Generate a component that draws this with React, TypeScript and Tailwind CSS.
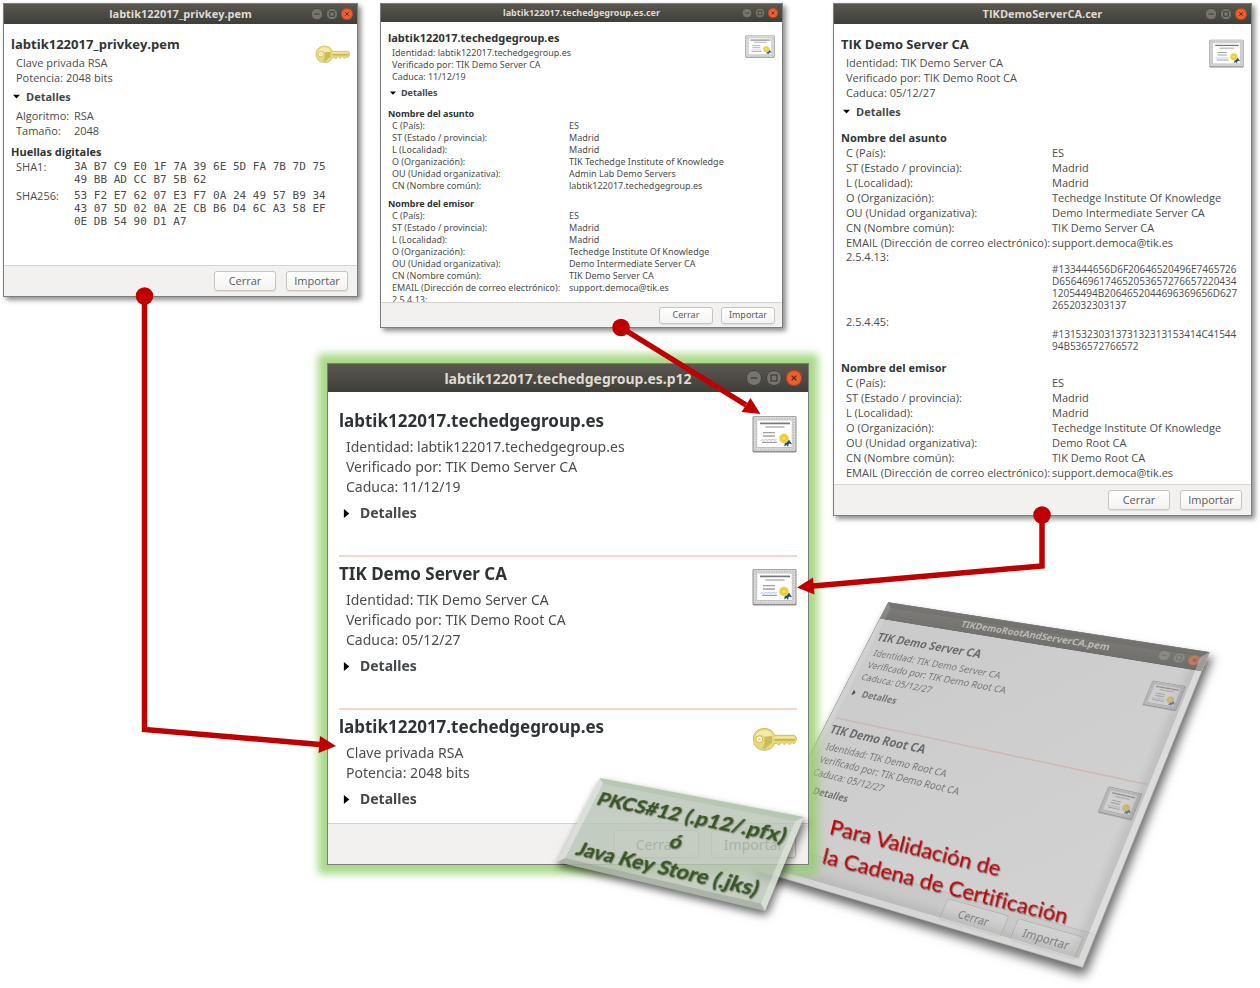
import type { ReactNode } from "react";

type Size = "xs" | "sm" | "lg";
type Point = [number, number];

const styles = {
  xs: {
    font: "font-['Noto_Sans',sans-serif]",
    bar: "h-[18px] text-[9px]",
    controls: "right-1 gap-[3px]",
    dot: "size-[10px]",
    body: "px-[7px] pt-2",
    heading: "text-[11px] leading-4",
    lines: "mt-px pl-1 text-[9px] leading-3",
    toggle: "mt-1 pl-[2px] gap-[5px] text-[9px] leading-3",
    arrow: "size-[6px]",
    cert: "mt-[5px] h-[23px] w-[30px]",
    key: "mt-[5px] h-[16px] w-[30px]",
    section: "text-[9px] leading-3",
    rows: "pl-1 text-[9px] leading-3",
    grid: "grid grid-cols-[177px_1fr]",
    footer: "h-[25px] gap-2 pr-[7px] text-[9px]",
    button: "h-[17px] w-[54px]",
  },
  sm: {
    font: "font-['Open_Sans',sans-serif]",
    bar: "h-[20px] text-[11px]",
    controls: "right-1 gap-[3px]",
    dot: "size-[12px]",
    body: "px-[7px] pt-[11px]",
    heading: "text-[13px] leading-[18px]",
    lines: "mt-[2px] pl-[5px] text-[11px] leading-[15px]",
    toggle: "mt-1 pl-[2px] gap-[6px] text-[11px] leading-[15px]",
    arrow: "size-[7px]",
    cert: "mt-1 h-[29px] w-[35px]",
    key: "mt-[10px] h-[19px] w-[35px]",
    section: "text-[11px] leading-[15px]",
    rows: "pl-[5px] text-[11px] leading-[15px]",
    grid: "grid grid-cols-[206px_1fr]",
    footer: "h-[31px] gap-[10px] pr-[9px] text-[11px]",
    button: "h-5 w-[62px]",
  },
  lg: {
    font: "font-['Noto_Sans',sans-serif]",
    bar: "h-[28px] text-[14px]",
    controls: "right-[6px] gap-1",
    dot: "size-4",
    body: "px-[11px] pt-[17px]",
    heading: "text-[17px] leading-6",
    lines: "mt-1 pl-[7px] text-[14px] leading-5",
    toggle: "mt-[6px] pl-[4px] gap-2 text-[14px] leading-5",
    arrow: "size-[9px]",
    cert: "mt-[6px] h-[38px] w-[45px]",
    key: "mt-[12px] h-[25px] w-[45px]",
    section: "text-[14px] leading-5",
    rows: "pl-[7px] text-[14px] leading-5",
    grid: "grid grid-cols-[240px_1fr]",
    footer: "h-[41px] gap-3 pr-3 text-[14px]",
    button: "h-7 w-[85px]",
  },
};

/* Projects a w x h box onto four corners, clockwise from the top left. */
function project(w: number, h: number, [p0, p1, p2, p3]: [Point, Point, Point, Point]) {
  const dx1 = p1[0] - p2[0];
  const dy1 = p1[1] - p2[1];
  const dx2 = p3[0] - p2[0];
  const dy2 = p3[1] - p2[1];
  const sx = p0[0] - p1[0] + p2[0] - p3[0];
  const sy = p0[1] - p1[1] + p2[1] - p3[1];
  const det = dx1 * dy2 - dx2 * dy1;
  const g = (sx * dy2 - dx2 * sy) / det;
  const k = (dx1 * sy - sx * dy1) / det;
  const a = (p1[0] - p0[0] + g * p1[0]) / w;
  const d = (p1[1] - p0[1] + g * p1[1]) / w;
  const b = (p3[0] - p0[0] + k * p3[0]) / h;
  const e = (p3[1] - p0[1] + k * p3[1]) / h;
  return `matrix3d(${[a, d, 0, g / w, b, e, 0, k / h, 0, 0, 1, 0, p0[0], p0[1], 0, 1].join(",")})`;
}

function CertIcon({ className }: { className: string }) {
  return (
    <svg viewBox="0 0 45 38" preserveAspectRatio="none" className={`shrink-0 ${className}`} aria-hidden="true">
      <rect x="0.5" y="1" width="44" height="36.5" rx="1.5" fill="#8f8f8f" />
      <rect x="1.6" y="1.8" width="41.8" height="34" rx="0.8" fill="#e6e6e6" />
      <rect x="3.2" y="3.4" width="38.6" height="30.800" fill="none" stroke="#c3c3c3" strokeWidth="1.6" strokeDasharray="1.8 0.8" />
      <rect x="4.800" y="5" width="35.400" height="27.600" fill="#fff" stroke="#b5b5b5" strokeWidth="0.8" />
      <path d="M8 8.4h30" stroke="#777" strokeWidth="1.7" />
      <path d="M13.5 12h19" stroke="#a4a4a4" strokeWidth="1.3" />
      <path d="M11 17.6h12M11 21h12M10 27.4h15" stroke="#a0a0a0" strokeWidth="1.3" />
      <path d="M8.5 25.6l1.800-1 1.400.800 2-.900 1.600.800 2-.900 1.800.900 2-1 1.600.900 2-.600" fill="none" stroke="#9db9de" strokeWidth="0.9" />
      <path d="M33.2 26l-1 5.400 2.400-1.400 1.400 2 .800-3.600 3.200.800-3-4.600z" fill="#1d4a96" />
      <circle cx="32" cy="23.400" r="4.700" fill="#f6cf36" stroke="#f9e27b" strokeWidth="0.8" strokeDasharray="1.2 0.8" />
      <circle cx="32" cy="23.400" r="2.200" fill="#fbe57a" stroke="#dfac1e" strokeWidth="0.5" />
    </svg>
  );
}

function KeyIcon({ className }: { className: string }) {
  return (
    <svg viewBox="0 0 45 25" preserveAspectRatio="none" className={`shrink-0 ${className}`} aria-hidden="true">
      <path
        d="M12 1.5C18 1.5 21 4 22.5 8.3H42.5L44.3 10.5V13.5L42 16.8 40 15.4 37.6 17.6 35 15.2 32.2 17.6 29.8 15.2 27 18 24.5 16.4H22.5C21 20.8 17.5 23.2 12 23.2 5.5 23.2 1.4 18.5 1.4 12.3 1.4 6 5.5 1.5 12 1.5Z"
        fill="#e6d880"
        stroke="#d2be58"
        strokeWidth="1"
      />
      <path d="M12 3.2C17 3.2 19.5 5.5 20.6 9.2L12.5 9.6C10 6.5 5.5 7.5 3.4 10 4 6 7.5 3.2 12 3.2Z" fill="#f3ebab" />
      <path d="M12.5 10L20 8.8V15.5L13 21.8H10.5L12.5 16.5Z" fill="#c2ae48" opacity="0.7" />
      <path d="M22.5 10.2H42.3" stroke="#f5edae" strokeWidth="1.2" />
      <path d="M22.5 13H42.8" stroke="#c3a935" strokeWidth="1.4" />
      <circle cx="7.4" cy="12.2" r="3.3" fill="#fff" stroke="#d2bd50" strokeWidth="1" />
      <circle cx="7.4" cy="12.2" r="1.5" fill="#e9da80" />
    </svg>
  );
}

function WindowControls({ size }: { size: Size }) {
  const s = styles[size];
  return (
    <div className={`absolute inset-y-0 flex items-center ${s.controls}`}>
      <button aria-label="Minimizar" className={`rounded-full bg-[#77756d] ${s.dot}`}>
        <svg viewBox="0 0 16 16" className="size-full">
          <circle cx="8" cy="8" r="7.5" fill="none" stroke="#3a3935" />
          <path d="M4.5 8h7" stroke="#3c3b37" strokeWidth="1.3" />
        </svg>
      </button>
      <button aria-label="Maximizar" className={`rounded-full bg-[#77756d] ${s.dot}`}>
        <svg viewBox="0 0 16 16" className="size-full">
          <circle cx="8" cy="8" r="7.5" fill="none" stroke="#3a3935" />
          <rect x="5" y="5" width="6" height="6" fill="none" stroke="#3c3b37" strokeWidth="1.2" />
        </svg>
      </button>
      <button aria-label="Cerrar ventana" className={`rounded-full bg-[#ee5f2e] ${s.dot}`}>
        <svg viewBox="0 0 16 16" className="size-full">
          <circle cx="8" cy="8" r="7.5" fill="none" stroke="#8e3a1c" strokeWidth="0.8" />
          <path d="M5.6 5.6l4.8 4.8M10.4 5.6l-4.8 4.8" stroke="#5b2411" strokeWidth="1.2" />
        </svg>
      </button>
    </div>
  );
}

function Window({ title, size, className, children }: { title: string; size: Size; className: string; children: ReactNode }) {
  const s = styles[size];
  return (
    <section className={`flex flex-col border border-[#7d7d7d] bg-white text-[#4c4c4c] ${s.font} ${className}`}>
      <header className={`relative flex shrink-0 items-center justify-center bg-gradient-to-b from-[#5a574f] to-[#3f3e39] font-bold text-[#dfdbd2] ${s.bar}`}>
        <h1>{title}</h1>
        <WindowControls size={size} />
      </header>
      <div className={`min-h-0 flex-1 overflow-hidden ${s.body}`}>{children}</div>
      <footer className={`flex shrink-0 items-center justify-end border-t border-[#d6d3d0] bg-[#f2f1f0] ${s.footer}`}>
        {["Cerrar", "Importar"].map((label) => (
          <button
            key={label}
            className={`flex items-center justify-center rounded-[3px] border border-[#c8c4c0] bg-gradient-to-b from-white to-[#f4f3f2] text-[#5c5c5c] shadow-[0_1px_1px_rgba(0,0,0,0.08)] ${s.button}`}
          >
            {label}
          </button>
        ))}
      </footer>
    </section>
  );
}

function Entry({ size, name, lines, icon, open = false }: { size: Size; name: string; lines: string[]; icon: "cert" | "key"; open?: boolean }) {
  const s = styles[size];
  return (
    <div>
      <div className="flex items-start justify-between">
        <div>
          <h2 className={`font-bold text-[#2e3436] ${s.heading}`}>{name}</h2>
          <div className={s.lines}>
            {lines.map((line) => (
              <p key={line}>{line}</p>
            ))}
          </div>
        </div>
        {icon === "cert" ? <CertIcon className={s.cert} /> : <KeyIcon className={s.key} />}
      </div>
      <button aria-expanded={open} className={`flex items-center font-bold text-[#45494b] ${s.toggle}`}>
        <svg viewBox="0 0 10 10" className={s.arrow} aria-hidden="true">
          <path d={open ? "M0 2.5H10L5 8Z" : "M1 0V10L7 5Z"} fill="#000" />
        </svg>
        Detalles
      </button>
    </div>
  );
}

function Fields({ size, title, rows }: { size: Size; title: string; rows: [string, string][] }) {
  const s = styles[size];
  return (
    <>
      <h3 className={`font-bold text-[#2e3436] ${s.section}`}>{title}</h3>
      <dl className={s.rows}>
        {rows.map(([label, value]) => (
          <div key={label} className={s.grid}>
            <dt className="whitespace-nowrap">{label}</dt>
            <dd className="whitespace-nowrap">{value}</dd>
          </div>
        ))}
      </dl>
    </>
  );
}

function LongField({ label, value }: { label: string; value: string[] }) {
  return (
    <dl className="pl-[5px]">
      <dt className="text-[11px] leading-[13px]">{label}</dt>
      <dd className="pl-[206px] text-[10px] leading-3">
        {value.map((line) => (
          <div key={line}>{line}</div>
        ))}
      </dd>
    </dl>
  );
}

function subject(o: string, ou: string, cn: string, email?: string): [string, string][] {
  const rows: [string, string][] = [
    ["C (País):", "ES"],
    ["ST (Estado / provincia):", "Madrid"],
    ["L (Localidad):", "Madrid"],
    ["O (Organización):", o],
    ["OU (Unidad organizativa):", ou],
    ["CN (Nombre común):", cn],
  ];
  if (email) rows.push(["EMAIL (Dirección de correo electrónico):", email]);
  return rows;
}

const HOST = "labtik122017.techedgegroup.es";
const KNOWLEDGE = "Techedge Institute Of Knowledge";
const MAIL = "support.democa@tik.es";

const fingerprints = [
  { label: "SHA1:", lines: ["3A B7 C9 E0 1F 7A 39 6E 5D FA 7B 7D 75", "49 BB AD CC B7 5B 62"] },
  {
    label: "SHA256:",
    lines: ["53 F2 E7 62 07 E3 F7 0A 24 49 57 B9 34", "43 07 5D 02 0A 2E CB B6 D4 6C A3 58 EF", "0E DB 54 90 D1 A7"],
  },
];

const serverLines = ["Identidad: TIK Demo Server CA", "Verificado por: TIK Demo Root CA", "Caduca: 05/12/27"];
const rootLines = ["Identidad: TIK Demo Root CA", "Verificado por: TIK Demo Root CA", "Caduca: 05/12/27"];
const hostLines = [`Identidad: ${HOST}`, "Verificado por: TIK Demo Server CA", "Caduca: 11/12/19"];
const keyLines = ["Clave privada RSA", "Potencia: 2048 bits"];

function Separator() {
  return <hr className="mt-8 mb-[5px] h-[2px] border-0 bg-[#fbd3c8]" />;
}

const windowShadow = "shadow-[3px_3px_5px_rgba(0,0,0,0.45)]";

export default function App() {
  return (
    <main className="relative min-h-screen w-full overflow-hidden bg-white">
      <Window title="labtik122017_privkey.pem" size="sm" className={`absolute top-[3px] left-[3px] h-[294px] w-[355px] ${windowShadow}`}>
        <Entry size="sm" name="labtik122017_privkey.pem" lines={keyLines} icon="key" open />
        <dl className="mt-1 grid grid-cols-[58px_1fr] pl-[5px] text-[11px] leading-[15px]">
          <dt>Algoritmo:</dt>
          <dd>RSA</dd>
          <dt>Tamaño:</dt>
          <dd>2048</dd>
        </dl>
        <h3 className="mt-[6px] text-[11px] leading-[15px] font-bold text-[#2e3436]">Huellas digitales</h3>
        <dl className="grid grid-cols-[58px_1fr] gap-y-[2px] pl-[5px] text-[11px] leading-[15px]">
          {fingerprints.map((print) => (
            <div key={print.label} className="contents">
              <dt>{print.label}</dt>
              <dd className="pt-px font-['DejaVu_Sans_Mono',monospace] leading-[13px] whitespace-nowrap">
                {print.lines.map((line) => (
                  <div key={line}>{line}</div>
                ))}
              </dd>
            </div>
          ))}
        </dl>
      </Window>

      <Window title="labtik122017.techedgegroup.es.cer" size="xs" className={`absolute top-[3px] left-[380px] h-[325px] w-[403px] ${windowShadow}`}>
        <Entry size="xs" name={HOST} lines={hostLines} icon="cert" open />
        <div className="mt-[9px] flex flex-col gap-[6px]">
          <div>
            <Fields size="xs" title="Nombre del asunto" rows={subject("TIK Techedge Institute of Knowledge", "Admin Lab Demo Servers", HOST)} />
          </div>
          <div>
            <Fields
              size="xs"
              title="Nombre del emisor"
              rows={[...subject(KNOWLEDGE, "Demo Intermediate Server CA", "TIK Demo Server CA", MAIL), ["2.5.4.13:", ""]]}
            />
          </div>
        </div>
      </Window>

      <Window title="TIKDemoServerCA.cer" size="sm" className={`absolute top-[3px] left-[833px] h-[513px] w-[419px] ${windowShadow}`}>
        <Entry size="sm" name="TIK Demo Server CA" lines={serverLines} icon="cert" open />
        <div className="mt-[11px]">
          <Fields size="sm" title="Nombre del asunto" rows={subject(KNOWLEDGE, "Demo Intermediate Server CA", "TIK Demo Server CA", MAIL)} />
          <div className="flex flex-col gap-1">
            <LongField
              label="2.5.4.13:"
              value={["#133444656D6F20646520496E7465726", "D6564696174652053657276657220434", "12054494B2064652044696369656D627", "2652032303137"]}
            />
            <LongField label="2.5.4.45:" value={["#1315323031373132313153414C41544", "94B536572766572"]} />
          </div>
        </div>
        <div className="mt-2">
          <Fields size="sm" title="Nombre del emisor" rows={subject(KNOWLEDGE, "Demo Root CA", "TIK Demo Root CA", MAIL)} />
        </div>
      </Window>

      <div
        className="absolute top-0 left-0 h-[430px] w-[482px] origin-top-left shadow-[6px_8px_12px_rgba(0,0,0,0.6)]"
        style={{ transform: project(482, 430, [[888, 602], [1210, 652], [1083, 968], [751, 869]]) }}
      >
        <Window title="TIKDemoRootAndServerCA.pem" size="lg" className="size-full">
          <Entry size="lg" name="TIK Demo Server CA" lines={serverLines} icon="cert" />
          <Separator />
          <Entry size="lg" name="TIK Demo Root CA" lines={rootLines} icon="cert" />
        </Window>
        <div className="pointer-events-none absolute inset-0 border-[9px] border-t-[rgba(60,60,55,0.12)] border-r-[rgba(250,250,250,0.3)] border-b-[rgba(240,240,240,0.35)] border-l-[rgba(255,255,255,0.12)] bg-gradient-to-br from-[rgba(158,158,158,0.55)] to-[rgba(158,158,158,0.46)] bg-origin-border shadow-[inset_-10px_-8px_8px_rgba(90,90,90,0.12)]" />
      </div>

      <p className="absolute top-[841px] left-[823px] rotate-[14deg] font-['Lato',sans-serif] text-[22px] leading-[30px] whitespace-nowrap text-[#c00000] [font-variant-ligatures:none] [text-shadow:1px_1px_1px_rgba(0,0,0,0.45)]">
        Para Validación de
        <br />
        la Cadena de Certificación
      </p>

      <Window
        title="labtik122017.techedgegroup.es.p12"
        size="lg"
        className="absolute top-[363px] left-[327px] h-[502px] w-[482px] shadow-[0_0_8px_9px_rgba(146,208,106,0.8)]"
      >
        <Entry size="lg" name={HOST} lines={hostLines} icon="cert" />
        <Separator />
        <Entry size="lg" name="TIK Demo Server CA" lines={serverLines} icon="cert" />
        <Separator />
        <Entry size="lg" name={HOST} lines={keyLines} icon="key" />
      </Window>

      <div
        className="absolute top-0 left-0 flex h-[100px] w-[210px] origin-top-left flex-col items-center justify-center border-[6px] border-t-[rgba(170,190,165,0.85)] border-r-[rgba(211,220,209,0.9)] border-b-[rgba(163,172,161,0.9)] border-l-[rgba(216,220,216,0.9)] bg-[rgba(184,195,181,0.82)] bg-clip-padding font-['Lato',sans-serif] text-[21px] leading-[29px] font-black whitespace-nowrap text-[#375623] shadow-[3px_4px_8px_rgba(0,0,0,0.6)] [text-shadow:1px_1px_1px_rgba(0,0,0,0.35)]"
        style={{ transform: project(210, 100, [[600, 778], [804, 817], [765, 911], [557, 862]]) }}
      >
        <span>PKCS#12 (.p12/.pfx)</span>
        <span>ó</span>
        <span>Java Key Store (.jks)</span>
      </div>

      <svg viewBox="0 0 1260 988" className="pointer-events-none absolute top-0 left-0 h-[988px] w-[1260px]" aria-hidden="true">
        <g fill="none" stroke="#c00000" strokeWidth="5.5">
          <path d="M144.500 296V729.500L320 744.500" />
          <path d="M621 327.500L746 405" />
          <path d="M1042 515V566L813 586" />
        </g>
        <g fill="#c00000">
          <circle cx="144.5" cy="296" r="8.8" />
          <circle cx="621" cy="327.5" r="8.8" />
          <circle cx="1042" cy="515" r="8.8" />
          <path d="M336 746L318.500 753L320 736Z" />
          <path d="M760.500 414L741.500 412L750.500 398Z" />
          <path d="M797 587.500L813 577.500L814.500 594.500Z" />
        </g>
      </svg>
    </main>
  );
}
